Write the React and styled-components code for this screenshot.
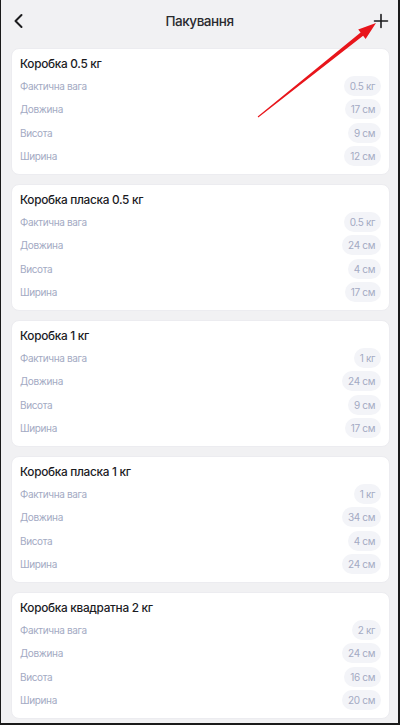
import React from "react";
import styled, { createGlobalStyle } from "styled-components";

const Global = createGlobalStyle`
  html, body { margin: 0; padding: 0; background: #f1f1f3; }
  body { font-family: Inter, "Noto Sans", sans-serif; }
  * { box-sizing: border-box; }
`;

const Frame = styled.div`
  position: relative;
  width: 400px;
  height: 725px;
  overflow: hidden;
  background: #f1f1f3;
  border-left: 1px solid #1a1a1a;
  border-right: 2px solid #1a1a1a;
  border-bottom: 2px solid #1a1a1a;
  display: flex;
  flex-direction: column;
`;

const Header = styled.header`
  height: 42px;
  flex: none;
  display: grid;
  grid-template-columns: 40px 1fr 40px;
  align-items: center;
  padding: 0 8px 0 8px;
`;

const IconBtn = styled.div`
  display: flex;
  align-items: center;
  justify-content: ${(p) => p.$align};
  color: #1c1c1e;
`;

const Title = styled.h1`
  margin: 0;
  text-align: center;
  font-size: 13.5px;
  letter-spacing: -0.45px;
  font-weight: 500;
  color: #2a2a2e;
`;

const List = styled.div`
  display: flex;
  flex-direction: column;
  gap: 9px;
  padding: 6px 8px 0 10px;
`;

const Card = styled.section`
  background: #fff;
  border-radius: 8px;
  border: 1px solid #ececf0;
  padding: 7px 8px 6px 8px;
  display: flex;
  flex-direction: column;
`;

const CardTitle = styled.div`
  font-size: 11.8px;
  letter-spacing: -0.3px;
  font-weight: 500;
  line-height: 16px;
  color: #1b1b1f;
  margin-bottom: 2px;
`;

const Row = styled.div`
  height: 23.5px;
  display: flex;
  align-items: center;
  justify-content: space-between;
`;

const Label = styled.span`
  font-size: 10px;
  letter-spacing: -0.35px;
  color: #a3aac3;
`;

const Pill = styled.span`
  height: 20px;
  line-height: 20px;
  padding: 0 6px;
  border-radius: 10px;
  background: #f3f4f8;
  font-size: 10px;
  letter-spacing: -0.35px;
  color: #a3aac3;
`;

const Arrow = styled.svg`
  position: absolute;
  left: 0;
  top: 0;
  pointer-events: none;
`;

const data = [
  { name: "Коробка 0.5 кг", w: "0.5 кг", l: "17 см", h: "9 см", s: "12 см" },
  { name: "Коробка пласка 0.5 кг", w: "0.5 кг", l: "24 см", h: "4 см", s: "17 см" },
  { name: "Коробка 1 кг", w: "1 кг", l: "24 см", h: "9 см", s: "17 см" },
  { name: "Коробка пласка 1 кг", w: "1 кг", l: "34 см", h: "4 см", s: "24 см" },
  { name: "Коробка квадратна 2 кг", w: "2 кг", l: "24 см", h: "16 см", s: "20 см" },
];

export default function App() {
  return (
    <>
      <Global />
      <Frame>
        <Header>
          <IconBtn $align="flex-start">
            <svg width="20" height="20" viewBox="0 0 20 20" fill="none">
              <path d="M13 4 L7 10 L13 16" stroke="#1c1c1e" strokeWidth="2" strokeLinecap="round" strokeLinejoin="round" transform="translate(-0.5 0)" />
            </svg>
          </IconBtn>
          <Title>Пакування</Title>
          <IconBtn $align="flex-end">
            <svg width="18" height="18" viewBox="0 0 18 18" fill="none">
              <path d="M9 2.5 V15.5 M2.5 9 H15.5" stroke="#1c1c1e" strokeWidth="1.6" strokeLinecap="round" />
            </svg>
          </IconBtn>
        </Header>
        <List>
          {data.map((d) => (
            <Card key={d.name}>
              <CardTitle>{d.name}</CardTitle>
              <Row><Label>Фактична вага</Label><Pill>{d.w}</Pill></Row>
              <Row><Label>Довжина</Label><Pill>{d.l}</Pill></Row>
              <Row><Label>Висота</Label><Pill>{d.h}</Pill></Row>
              <Row><Label>Ширина</Label><Pill>{d.s}</Pill></Row>
            </Card>
          ))}
        </List>
        <Arrow width="400" height="725" viewBox="0 0 400 725">
          <polygon
            points="256.7,116.6 359.6,32.6 357.2,29.5 375,23 364.6,38.9 362.1,35.8 257.3,117.4"
            fill="#e8151b"
          />
        </Arrow>
      </Frame>
    </>
  );
}
